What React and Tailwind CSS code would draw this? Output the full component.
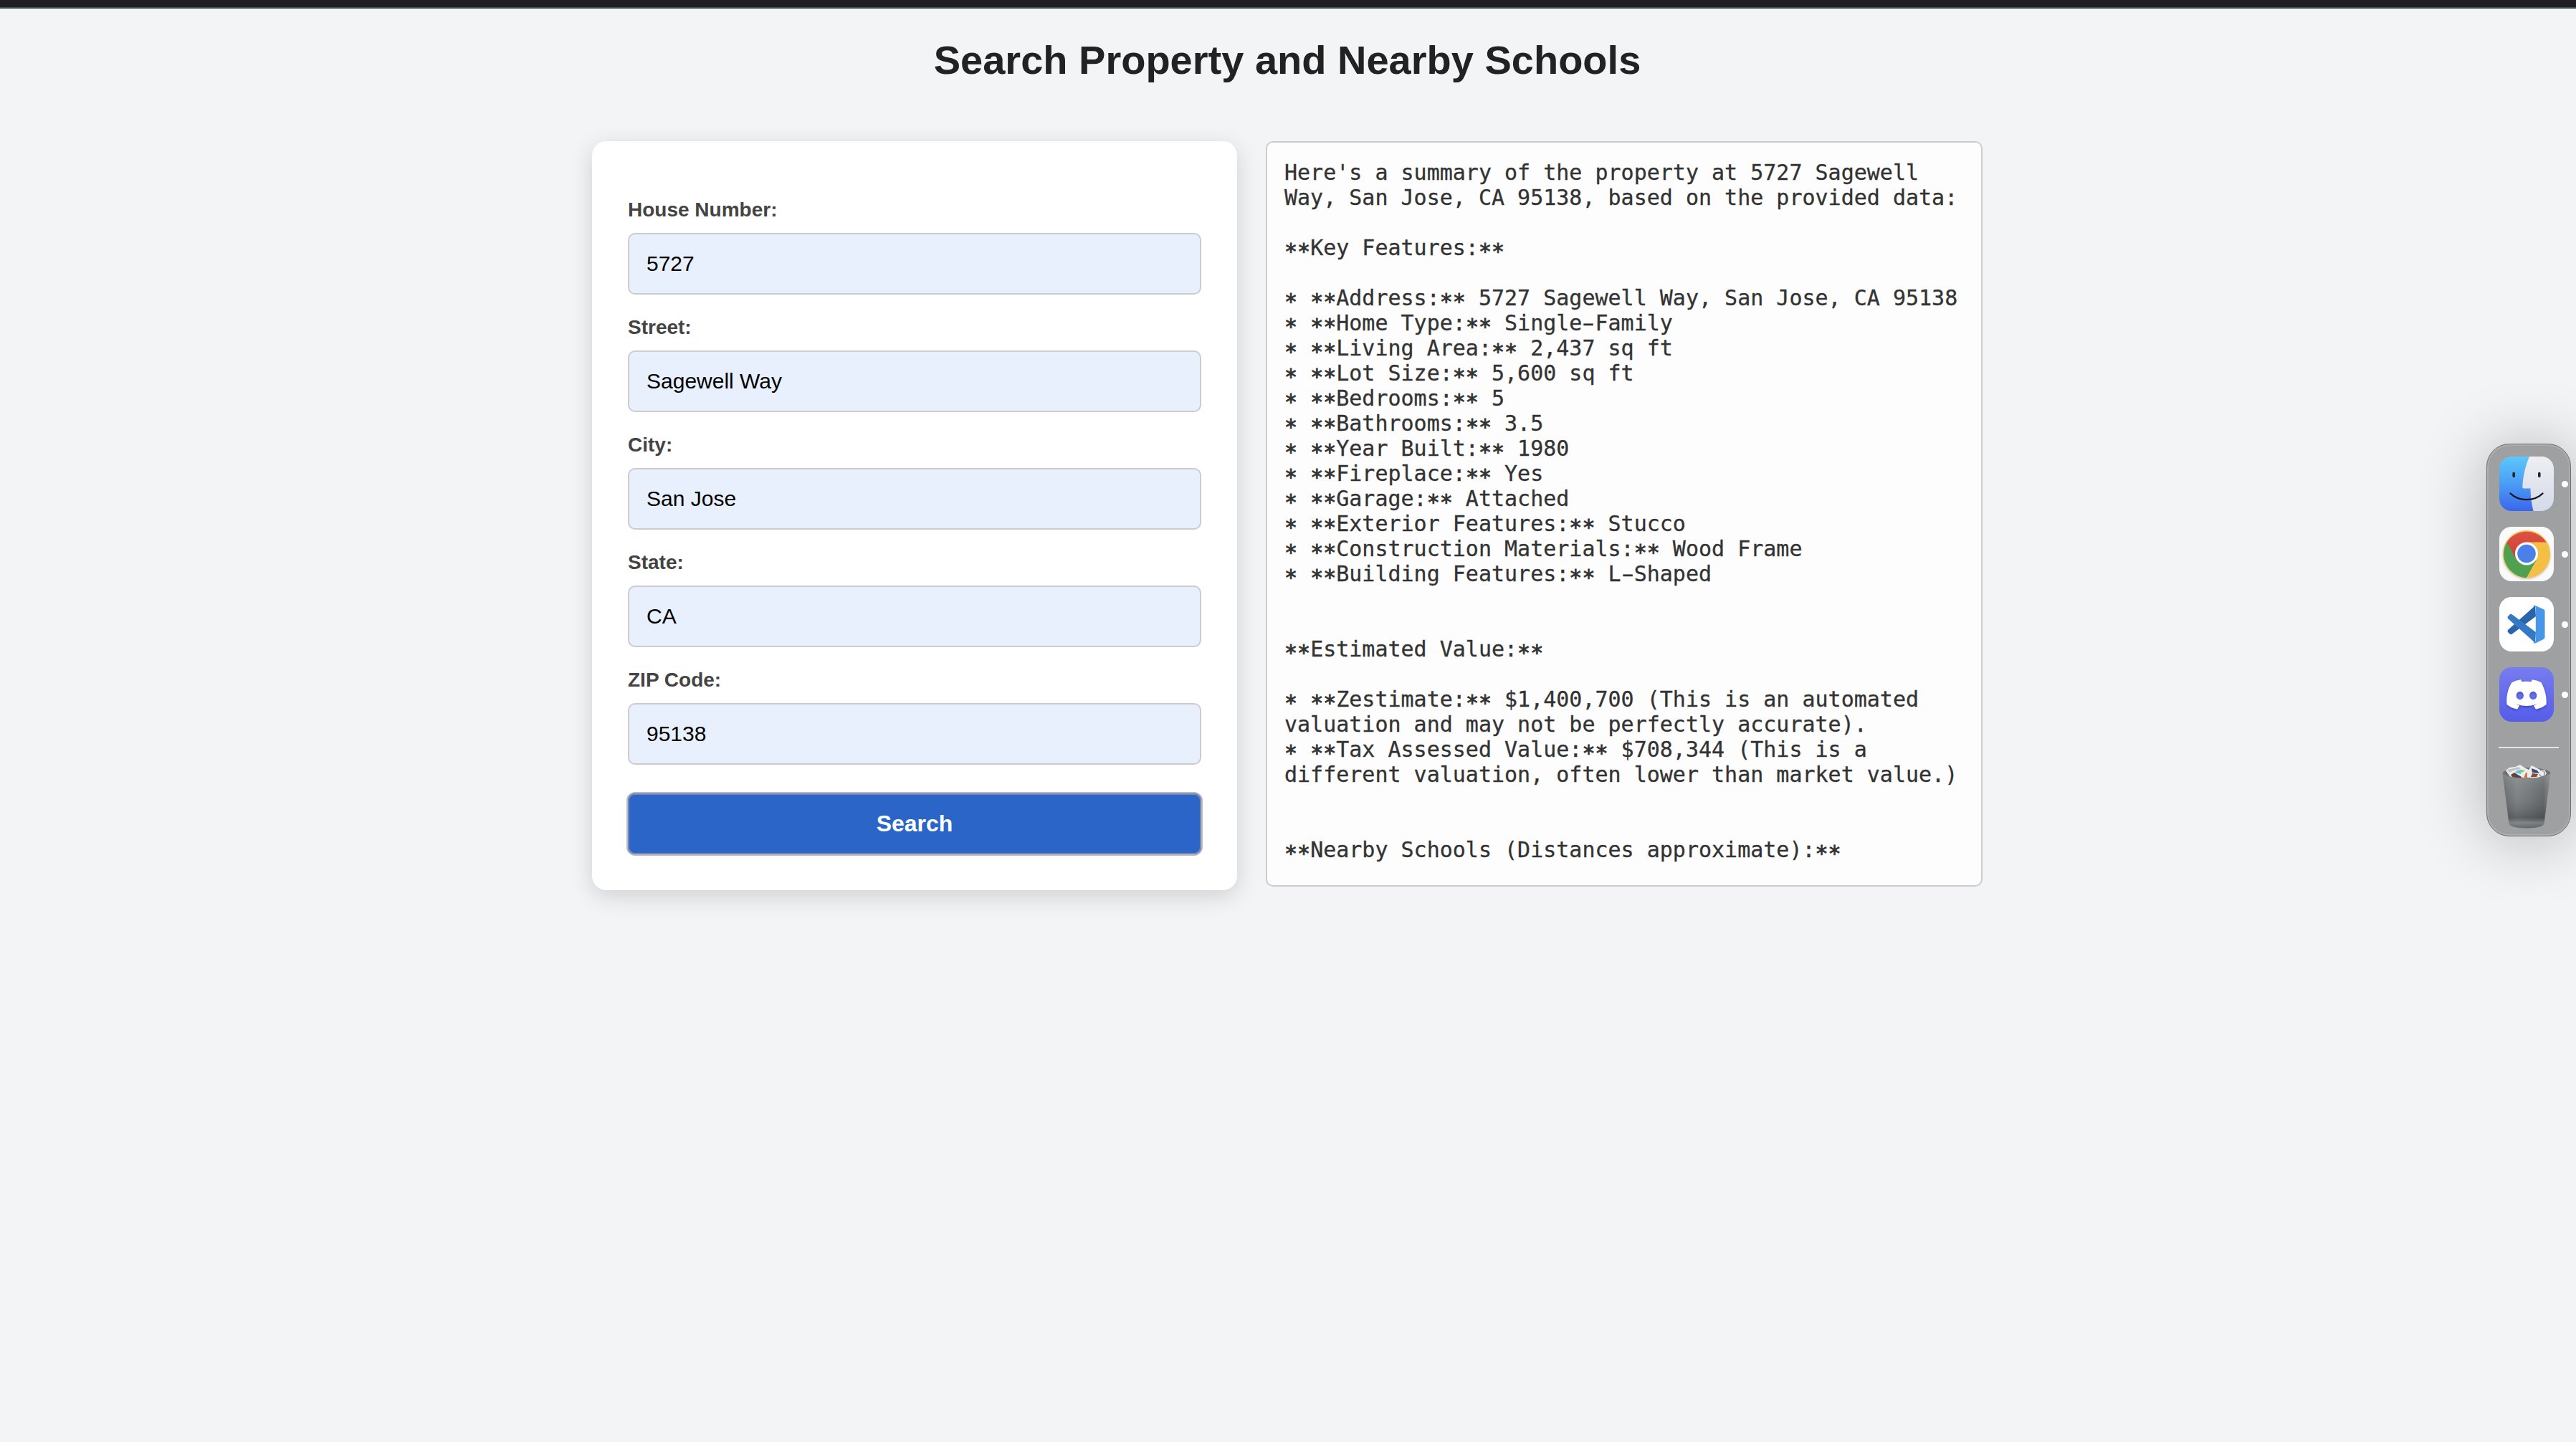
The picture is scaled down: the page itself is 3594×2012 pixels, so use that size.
import React from "react";

const FIELDS = [
  { label: "House Number:", value: "5727" },
  { label: "Street:", value: "Sagewell Way" },
  { label: "City:", value: "San Jose" },
  { label: "State:", value: "CA" },
  { label: "ZIP Code:", value: "95138" },
];

const SUMMARY = [
  "Here's a summary of the property at 5727 Sagewell",
  "Way, San Jose, CA 95138, based on the provided data:",
  "",
  "**Key Features:**",
  "",
  "* **Address:** 5727 Sagewell Way, San Jose, CA 95138",
  "* **Home Type:** Single-Family",
  "* **Living Area:** 2,437 sq ft",
  "* **Lot Size:** 5,600 sq ft",
  "* **Bedrooms:** 5",
  "* **Bathrooms:** 3.5",
  "* **Year Built:** 1980",
  "* **Fireplace:** Yes",
  "* **Garage:** Attached",
  "* **Exterior Features:** Stucco",
  "* **Construction Materials:** Wood Frame",
  "* **Building Features:** L-Shaped",
  "",
  "",
  "**Estimated Value:**",
  "",
  "* **Zestimate:** $1,400,700 (This is an automated",
  "valuation and may not be perfectly accurate).",
  "* **Tax Assessed Value:** $708,344 (This is a",
  "different valuation, often lower than market value.)",
  "",
  "",
  "**Nearby Schools (Distances approximate):**",
];

function SummaryLine({ text }) {
  return (
    <div className="h-[35px] whitespace-pre">
      {text.split(/(\*+|-)/).map((part, i) => {
        if (part.startsWith("*")) return <span key={i} className="relative top-[5px] [-webkit-text-stroke:0.9px_#333]">{part}</span>;
        if (part === "-") return <span key={i} className="inline-block scale-x-[1.7]">-</span>;
        return part;
      })}
    </div>
  );
}

function FinderIcon() {
  return (
    <svg viewBox="0 0 76 76" className="block size-[76px]">
      <defs>
        <linearGradient id="fb" x1="0" y1="0" x2="0" y2="1">
          <stop offset="0" stopColor="#5ec8fa" />
          <stop offset="0.5" stopColor="#4a9df5" />
          <stop offset="1" stopColor="#3a66ec" />
        </linearGradient>
        <linearGradient id="fw" x1="0" y1="0" x2="0" y2="1">
          <stop offset="0" stopColor="#efeff3" />
          <stop offset="1" stopColor="#d3dae8" />
        </linearGradient>
        <clipPath id="fc"><rect width="76" height="76" rx="17" /></clipPath>
      </defs>
      <g clipPath="url(#fc)">
        <rect width="76" height="76" fill="url(#fb)" />
        <path d="M42 0C36 14 33 28 32.300 42.500Q32.200 44.500 34 44.500H43.500C43.500 56 45 66 47.500 76H76V0Z" fill="url(#fw)" />
      </g>
      <path d="M20.200 23.500V27.500M55.800 23.500V27.500" stroke="#1d2630" strokeWidth="3.600" strokeLinecap="round" />
      <path d="M15.500 51.500C27 63 49 63 60.500 51.500" stroke="#10141a" strokeWidth="2.300" strokeLinecap="round" fill="none" />
    </svg>
  );
}

function ChromeIcon() {
  return (
    <svg viewBox="0 0 76 76" className="block size-[76px]">
      <defs>
        <linearGradient id="cr" x1="0" y1="0" x2="0" y2="1">
          <stop offset="0" stopColor="#dd5144" />
          <stop offset="1" stopColor="#c94334" />
        </linearGradient>
        <filter id="cs" x="-20%" y="-20%" width="140%" height="150%">
          <feDropShadow dx="0" dy="1.500" stdDeviation="1.800" floodColor="#8a7a30" floodOpacity="0.5" />
        </filter>
      </defs>
      <rect width="76" height="76" rx="17" fill="#fafafa" />
      <g filter="url(#cs)">
        <circle cx="38" cy="38" r="33" fill="#f3bf45" />
        <path d="M38 38L10.500 21.500A33 33 0 0 0 38 71L52 46Z" fill="#4fa151" />
        <path d="M38 38L24 46L10.500 21.500A33 33 0 0 1 65.500 21.500H38Z" fill="url(#cr)" />
      </g>
      <circle cx="38" cy="37.500" r="16" fill="#fff" />
      <circle cx="38" cy="37.500" r="12.800" fill="#4a80ea" />
    </svg>
  );
}

function CodeIcon() {
  return (
    <svg viewBox="0 0 76 76" className="block size-[76px]">
      <rect width="76" height="76" rx="17" fill="#fff" />
      <path d="M50 12L12.500 45.500Q10.500 47.500 12.500 49.500L14.500 51.500Q16 53 18 51.500L51 27Z" fill="#2a65ab" />
      <path d="M50 64L12.500 30.500Q10.500 28.500 12.500 26.500L14.500 24.500Q16 23 18 24.500L51 49Z" fill="#3578c6" />
      <path d="M49 11.500L62 17.300Q63.500 18 63.500 20V56Q63.500 58 62 58.700L50.500 64.500Q48 65 47 63Q50.500 64 50.800 60V16Q50.500 12 47 13Q48 11 49 11.500Z" fill="#4896e8" />
    </svg>
  );
}

function DiscordIcon() {
  return (
    <svg viewBox="0 0 76 76" className="block size-[76px]">
      <defs>
        <linearGradient id="dg" x1="0" y1="0" x2="0" y2="1">
          <stop offset="0" stopColor="#777cee" />
          <stop offset="1" stopColor="#555de9" />
        </linearGradient>
        <filter id="ds" x="-20%" y="-20%" width="140%" height="150%">
          <feDropShadow dx="0" dy="1.500" stdDeviation="1.800" floodColor="#20259a" floodOpacity="0.55" />
        </filter>
      </defs>
      <rect width="76" height="76" rx="17" fill="url(#dg)" />
      <path
        filter="url(#ds)"
        fillRule="evenodd"
        fill="#fff"
        d="M30 17.200Q23 18.200 17.500 21.200C12 30 9.500 40 10.500 52Q17 57 25 58.500L28 53.500Q25.500 52.500 23.500 51.300Q38 56.500 52.500 51.300Q50.500 52.500 48 53.500L51 58.500Q59 57 65.500 52C66.500 40 63 30 58.500 21.200Q53 18.200 46 17.200L44.500 20.200Q38 19.400 31.500 20.200ZM28.800 33.800A5.200 5.700 0 1 1 28.800 45.200A5.200 5.700 0 1 1 28.800 33.800ZM47.200 33.800A5.200 5.700 0 1 1 47.200 45.200A5.200 5.700 0 1 1 47.200 33.800Z"
      />
    </svg>
  );
}

function TrashIcon() {
  return (
    <svg viewBox="0 0 76 92" className="block h-[92px] w-[76px]">
      <defs>
        <linearGradient id="tb" x1="0" y1="0" x2="1" y2="0">
          <stop offset="0" stopColor="#66696b" />
          <stop offset="0.300" stopColor="#84888a" />
          <stop offset="0.600" stopColor="#73777a" />
          <stop offset="0.850" stopColor="#606467" />
          <stop offset="1" stopColor="#8c8f91" />
        </linearGradient>
        <linearGradient id="tv" x1="0" y1="0" x2="0" y2="1">
          <stop offset="0" stopColor="#a0a4a6" stopOpacity="0.500" />
          <stop offset="0.450" stopColor="#707476" stopOpacity="0.250" />
          <stop offset="0.800" stopColor="#35393b" stopOpacity="0.450" />
          <stop offset="0.900" stopColor="#85898b" stopOpacity="0.700" />
          <stop offset="1" stopColor="#5c6062" stopOpacity="0.800" />
        </linearGradient>
      </defs>
      <ellipse cx="38" cy="13" rx="33.500" ry="8" fill="#6d7072" />
      <path d="M9 9L14 5L22 4L29 1L35 5L41 8L45 2L57 8L63 8L66 13L62 19H16Z" fill="#eceded" />
      <path d="M11 8L20 6L27 4L30 7L20 9L14 12Z" fill="#c3c3c3" />
      <path d="M16 15L21 12L31 18V21H20Z" fill="#5d4440" />
      <path d="M25 9L32 8L30 14L22 12Z" fill="#5bc4dc" />
      <path d="M30 8L36 9L32 12Z" fill="#8ccf5a" />
      <path d="M36 14L39 11V21H34Z" fill="#c77a4c" />
      <path d="M45 6L53 9L56 13L46 12Z" fill="#3f4a78" />
      <path d="M46 13L54 14L52 18L44 18Z" fill="#95492f" />
      <path d="M57 9Q65 9 63 16Q58 20 56 14" stroke="#999" strokeWidth="1.600" fill="none" />
      <path d="M4.500 13Q14 19.500 38 20Q62 19.500 71.500 13L62.500 83Q61 89 38 89.500Q15 89 13.500 83Z" fill="url(#tb)" />
      <path d="M4.500 13Q14 19.500 38 20Q62 19.500 71.500 13L62.500 83Q61 89 38 89.500Q15 89 13.500 83Z" fill="url(#tv)" />
    </svg>
  );
}

function DockItem({ children }) {
  return (
    <div className="flex items-center">
      {children}
      <span className="ml-[11px] size-[9px] rounded-full bg-white" />
    </div>
  );
}

function Dock() {
  return (
    <aside className="absolute left-[3469px] top-[619px] flex h-[548px] w-[118px] flex-col gap-[22px] rounded-[32px] border border-[#6d6e71] bg-[#9fa0a2] pl-[17px] pt-[17px] shadow-[inset_0_0_0_2px_#adaeb0,0_4px_90px_rgba(0,0,0,0.27)]">
      <DockItem><FinderIcon /></DockItem>
      <DockItem><ChromeIcon /></DockItem>
      <DockItem><CodeIcon /></DockItem>
      <DockItem><DiscordIcon /></DockItem>
      <div className="-ml-px mt-[13px] h-[2px] w-[84px] shrink-0 bg-[#e4e5e6]" />
      <TrashIcon />
    </aside>
  );
}

export default function App() {
  return (
    <div className="relative h-[2012px] w-[3594px] overflow-hidden bg-[#f3f4f6] font-['Liberation_Sans',Arial,sans-serif]">
      <div className="h-[12px] border-b-2 border-[#43534d] bg-[#211d24]" />
      <h1 className="mt-[39px] pr-[2px] text-center text-[56px] font-bold leading-[66px] text-[#222]">
        Search Property and Nearby Schools
      </h1>
      <main className="mt-[80px] flex items-start justify-center gap-[40px] pr-[2px]">
        <form className="h-[1045px] w-[900px] rounded-[20px] bg-white px-[50px] pt-[78px] shadow-[0_8px_32px_rgba(0,0,0,0.15)]">
          {FIELDS.map((f) => (
            <div key={f.label} className="mb-[28px]">
              <label className="block h-[50px] text-[28px] font-bold leading-[36px] text-[#444]">{f.label}</label>
              <div className="flex h-[86px] items-center rounded-[10px] border-2 border-[#ccc] bg-[#e8f0fe] px-[24px] pb-[2px] text-[30px] text-black">
                {f.value}
              </div>
            </div>
          ))}
          <button type="button" className="mt-[40px] block h-[85px] w-full rounded-[10px] bg-[#2a65c7] pb-[2px] text-[32px] font-bold text-white shadow-[0_0_0_2px_#b9bcc6,inset_0_0_0_2px_#7488b0]">
            Search
          </button>
        </form>
        <section className="h-[1040px] w-[1000px] rounded-[10px] border-2 border-[#ccc] bg-[#fdfdfd] p-[24px] font-['DejaVu_Sans_Mono',monospace] text-[30px] leading-[35px] text-[#333] [-webkit-text-stroke:0.3px_#333]">
          {SUMMARY.map((line, i) => (
            <SummaryLine key={i} text={line} />
          ))}
        </section>
      </main>
      <Dock />
    </div>
  );
}
